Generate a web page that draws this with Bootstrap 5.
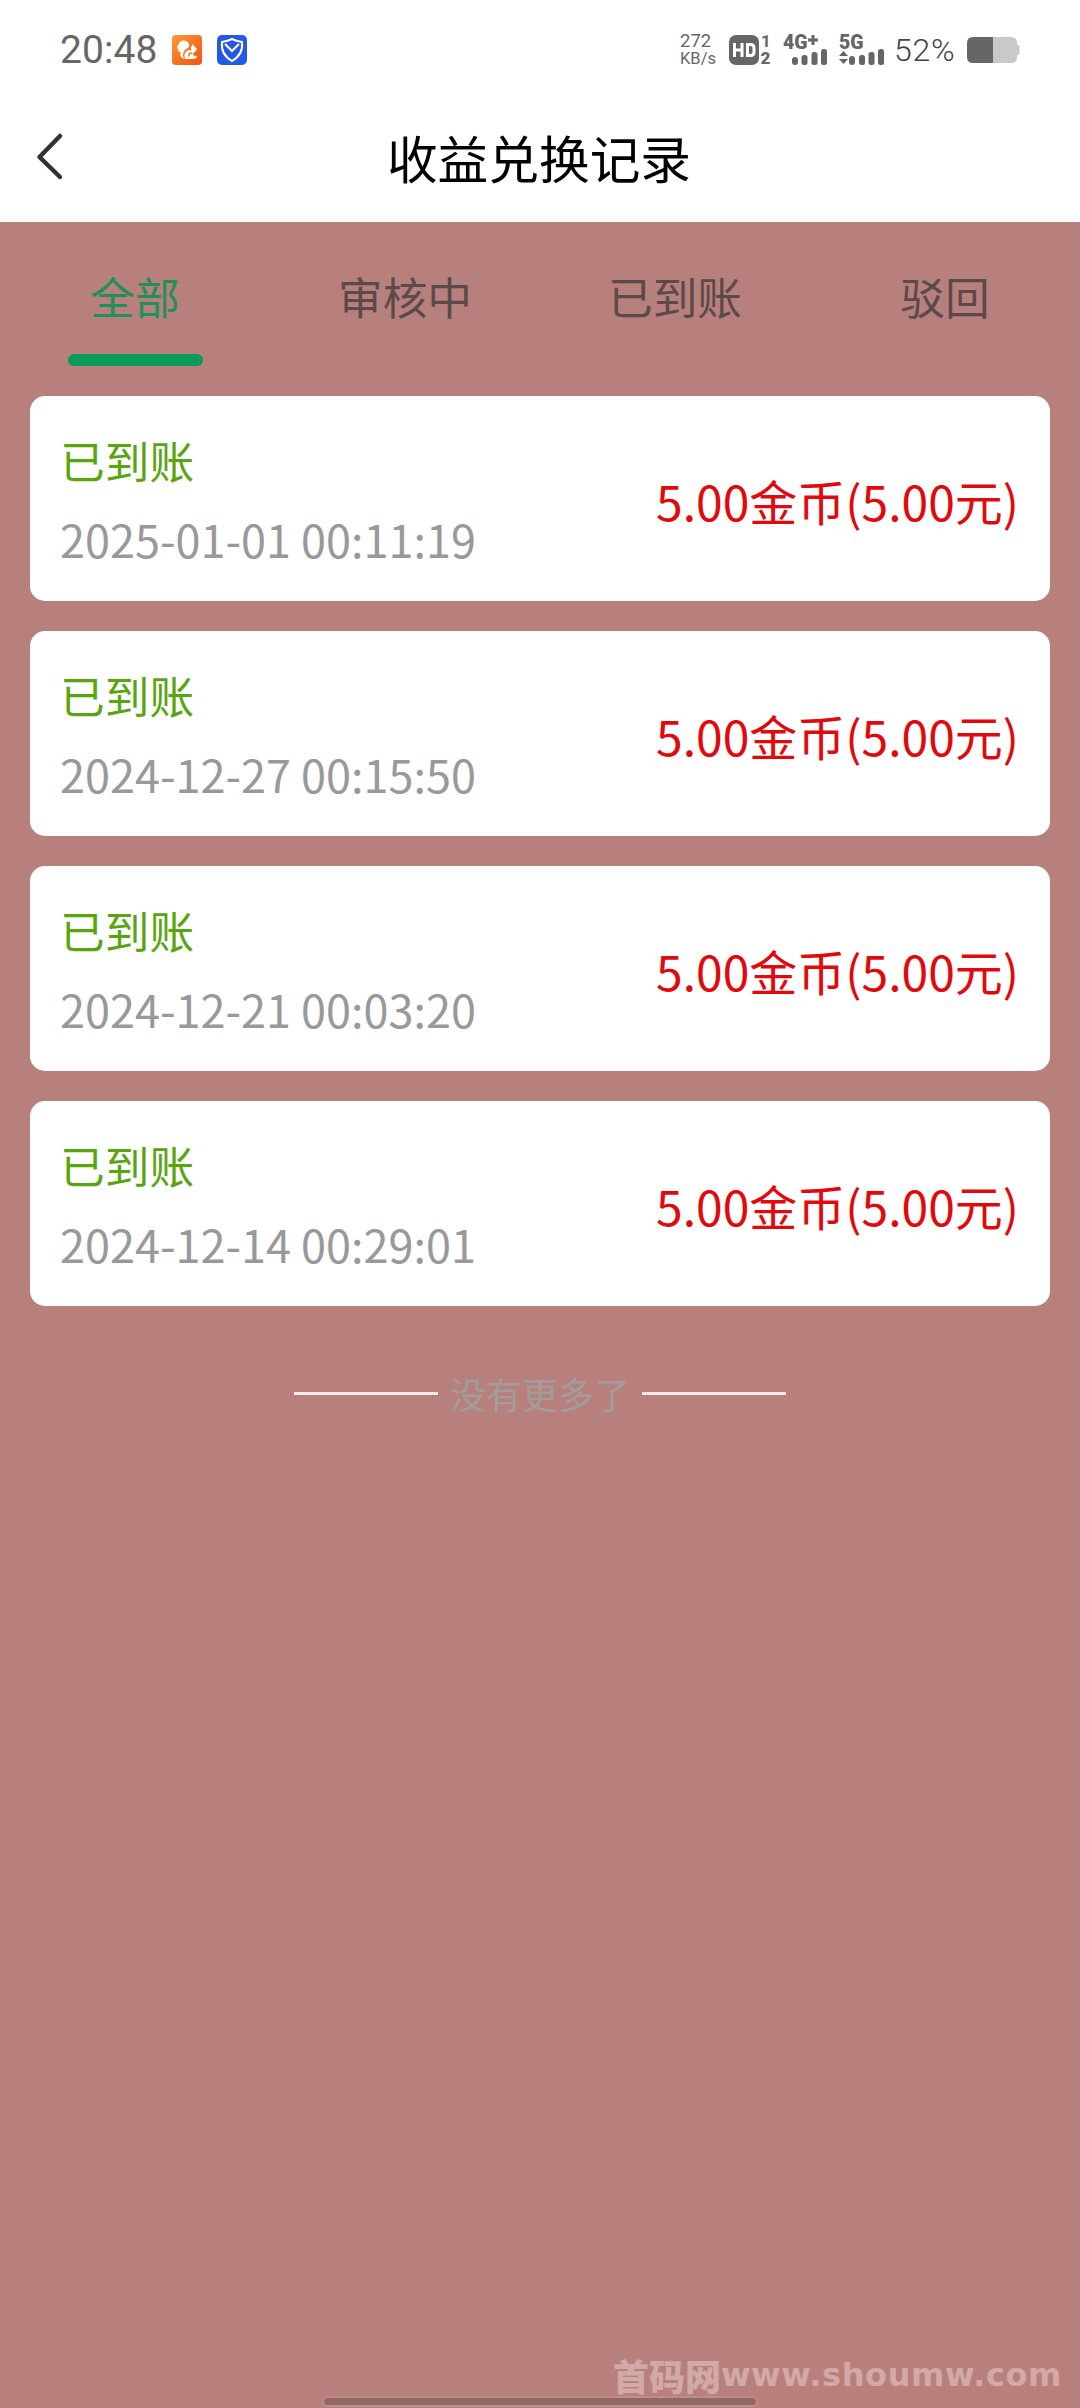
<!DOCTYPE html>
<html lang="zh-CN">
<head>
<meta charset="utf-8">
<meta name="viewport" content="width=device-width, initial-scale=1">
<title>收益兑换记录</title>
<link href="https://cdn.jsdelivr.net/npm/bootstrap@5.3.0/dist/css/bootstrap.min.css" rel="stylesheet">
<style>
body{background:#b8807d;font-family:"Noto Sans CJK SC",sans-serif;height:2408px;position:relative;overflow:hidden}
svg{display:block;flex:none}
svg text,.clock,.battery-pct,.net-speed{font-family:Roboto,sans-serif}
.status-bar{height:100px;padding:0 60px 0 60px}
.clock{font-size:39px;line-height:100px;width:112px;color:#666;letter-spacing:.1px}
.net-speed{font-size:18.5px;line-height:18px;width:49px;color:#666}
.net-speed span{display:block}
.net-speed .unit{font-size:16.5px}
.battery-pct{font-size:32px;font-weight:300;line-height:100px;width:72px;color:#444;letter-spacing:.8px}
.title-bar{height:122px;padding:0 36px 8px}
.title-bar h1{font-size:50.7px;font-weight:400;line-height:76px;color:#000;padding-right:30px}
.tabs .nav-link{font-size:44.7px;line-height:68px;height:144px;padding:40px 0 0;color:#5b4a49;border-radius:0}
.tabs .nav-link.active{color:#209058}
.tabs .nav-link.active::after{content:"";display:block;width:135px;height:12px;border-radius:6px;background:#079a5b;margin:24px auto 0}
.records{padding:30px 30px 0;gap:30px}
.record{height:205px;border:0;border-radius:15px;padding:2px 31px 0 30px}
.state{font-size:44.7px;line-height:68px;color:#58a60f}
.time{font-size:45px;line-height:68px;color:#999;margin-top:11px}
.amount{font-size:48px;line-height:72px;color:#e2090c}
.list-end{margin-top:60px;gap:12px;font-size:36px;line-height:54px;color:#a39c9b}
.list-end i{width:144px;height:3px;background:#f8e8e7}
.watermark{right:18px;bottom:10px;color:#d2a9a6;font-weight:900;font-size:36px;line-height:46px}
.watermark b{font:700 32px/46px "DejaVu Sans",sans-serif;letter-spacing:.6px}
.home-bar{left:324px;bottom:3px;width:432px;height:7px;border-radius:4px;background:#906967;box-shadow:0 0 0 2px #c18c89}
</style>
</head>
<body>
<header class="bg-white">
  <div class="status-bar d-flex align-items-center justify-content-between">
    <div class="d-flex align-items-center">
      <span class="clock">20:48</span>
      <svg width="30" height="30" viewBox="0 0 30 30"><defs><linearGradient id="og" x2="1" y2="1"><stop stop-color="#ff9638"/><stop offset="1" stop-color="#f2550c"/></linearGradient></defs><rect width="30" height="30" rx="4" fill="url(#og)"/><path d="M7 15C4 13 5 10 7 9.500 7 6 11 4.500 14 6c4 2 4 5 2 7-3 1-5 4-5 7 0 2 1 3 2 4-4-1-6-4-4-7l-4-1z" fill="#fff"/><path d="M19 12l2-3 1.500 2.500L25 14l-2 3-2 1-2-4z" fill="#fff"/><path d="M13.500 24c-2.500-4 0-9 4.500-9 3 0 4.500 3 3 5.500l4 .5c0 2-2 3-4 3z" fill="#fff"/><path d="M20.500 18.500c-3-1-4.500 1-3 3" fill="none" stroke="#f87023" stroke-width="1.500"/></svg>
      <svg width="30" height="30" viewBox="0 0 30 30" style="margin-left:15px"><rect width="30" height="30" rx="5" fill="#2459e5"/><path d="M15 4c4 2 7 2.500 10 3 1 9-3 15-10 19C8 22 4 16 5 7c3-.5 6-1 10-3z" fill="none" stroke="#fff" stroke-width="2"/><path d="M8 9l7 7 7-7" fill="none" stroke="#fff" stroke-width="2"/></svg>
    </div>
    <div class="d-flex align-items-center">
      <div class="net-speed"><span>272</span><span class="unit">KB/s</span></div>
      <svg width="54" height="54" viewBox="0 -10 54 54"><rect y="2" width="30" height="30" rx="7" fill="#666"/><path d="M5.500 10v14M13 10v14M5.500 17H13M18.500 11.500v11h3q3.500 0 3.500-3.500v-4q0-3.500-3.500-3.500z" fill="none" stroke="#fff" stroke-width="3"/><text x="32" y="14" font-size="17" font-weight="700" fill="#666">1</text><text x="31.500" y="31" font-size="17" font-weight="900" fill="#666">2</text></svg>
      <svg width="56" height="54" viewBox="0 -10 56 54" fill="#666"><text x="0" y="15.500" font-size="19.500" font-weight="900">4G</text><path d="M25 7h10M30 2v10" stroke="#666" stroke-width="3"/><rect x="9" y="24" width="6" height="8" rx="3"/><rect x="18.500" y="22" width="6" height="10" rx="2.500"/><rect x="28.500" y="19" width="6" height="13" rx="2.500"/><rect x="38" y="16" width="6" height="16" rx="2.500"/></svg>
      <svg width="55" height="54" viewBox="0 -10 55 54" fill="#666"><text x="0" y="15.500" font-size="19.500" font-weight="900">5G</text><path d="M0 23l4.500-5 4.500 5zM0 26h9l-4.500 5z"/><rect x="10" y="23" width="6" height="9" rx="3"/><rect x="20" y="22" width="6" height="10" rx="2.500"/><rect x="29.500" y="19" width="6" height="13" rx="2.500"/><rect x="39" y="16" width="6" height="16" rx="2.500"/></svg>
      <span class="battery-pct">52%</span>
      <svg width="54" height="28" viewBox="0 0 54 28"><rect x="48" y="9" width="5.500" height="10" rx="2" fill="#c9c9c9"/><path d="M27 1h18q6 0 6 6v14q0 6-6 6H27z" fill="#c9c9c9"/><path d="M27 1H7Q1 1 1 7v14q0 6 6 6h20z" fill="#666"/></svg>
    </div>
  </div>
  <div class="title-bar d-flex align-items-center">
    <svg width="28" height="66" viewBox="0 0 28 66"><path d="M24 12L3.500 33 24 53" fill="none" stroke="#333" stroke-width="4.500" stroke-linecap="round" stroke-linejoin="round"/></svg>
    <h1 class="flex-fill text-center m-0">收益兑换记录</h1>
  </div>
</header>
<nav class="tabs nav nav-fill row g-0 text-center">
  <a class="nav-link active col-3">全部</a>
  <a class="nav-link col-3">审核中</a>
  <a class="nav-link col-3">已到账</a>
  <a class="nav-link col-3">驳回</a>
</nav>
<main class="records d-flex flex-column">
  <div class="record card flex-row align-items-center justify-content-between"><div><div class="state">已到账</div><div class="time">2025-01-01 00:11:19</div></div><div class="amount">5.00金币(5.00元)</div></div>
  <div class="record card flex-row align-items-center justify-content-between"><div><div class="state">已到账</div><div class="time">2024-12-27 00:15:50</div></div><div class="amount">5.00金币(5.00元)</div></div>
  <div class="record card flex-row align-items-center justify-content-between"><div><div class="state">已到账</div><div class="time">2024-12-21 00:03:20</div></div><div class="amount">5.00金币(5.00元)</div></div>
  <div class="record card flex-row align-items-center justify-content-between"><div><div class="state">已到账</div><div class="time">2024-12-14 00:29:01</div></div><div class="amount">5.00金币(5.00元)</div></div>
</main>
<div class="list-end d-flex align-items-center justify-content-center"><i></i><span>没有更多了</span><i></i></div>
<div class="watermark position-absolute d-flex align-items-center">首码网<b>www.shoumw.com</b></div>
<div class="home-bar position-absolute"></div>
<script src="https://cdn.jsdelivr.net/npm/bootstrap@5.3.0/dist/js/bootstrap.bundle.min.js"></script>
</body>
</html>
